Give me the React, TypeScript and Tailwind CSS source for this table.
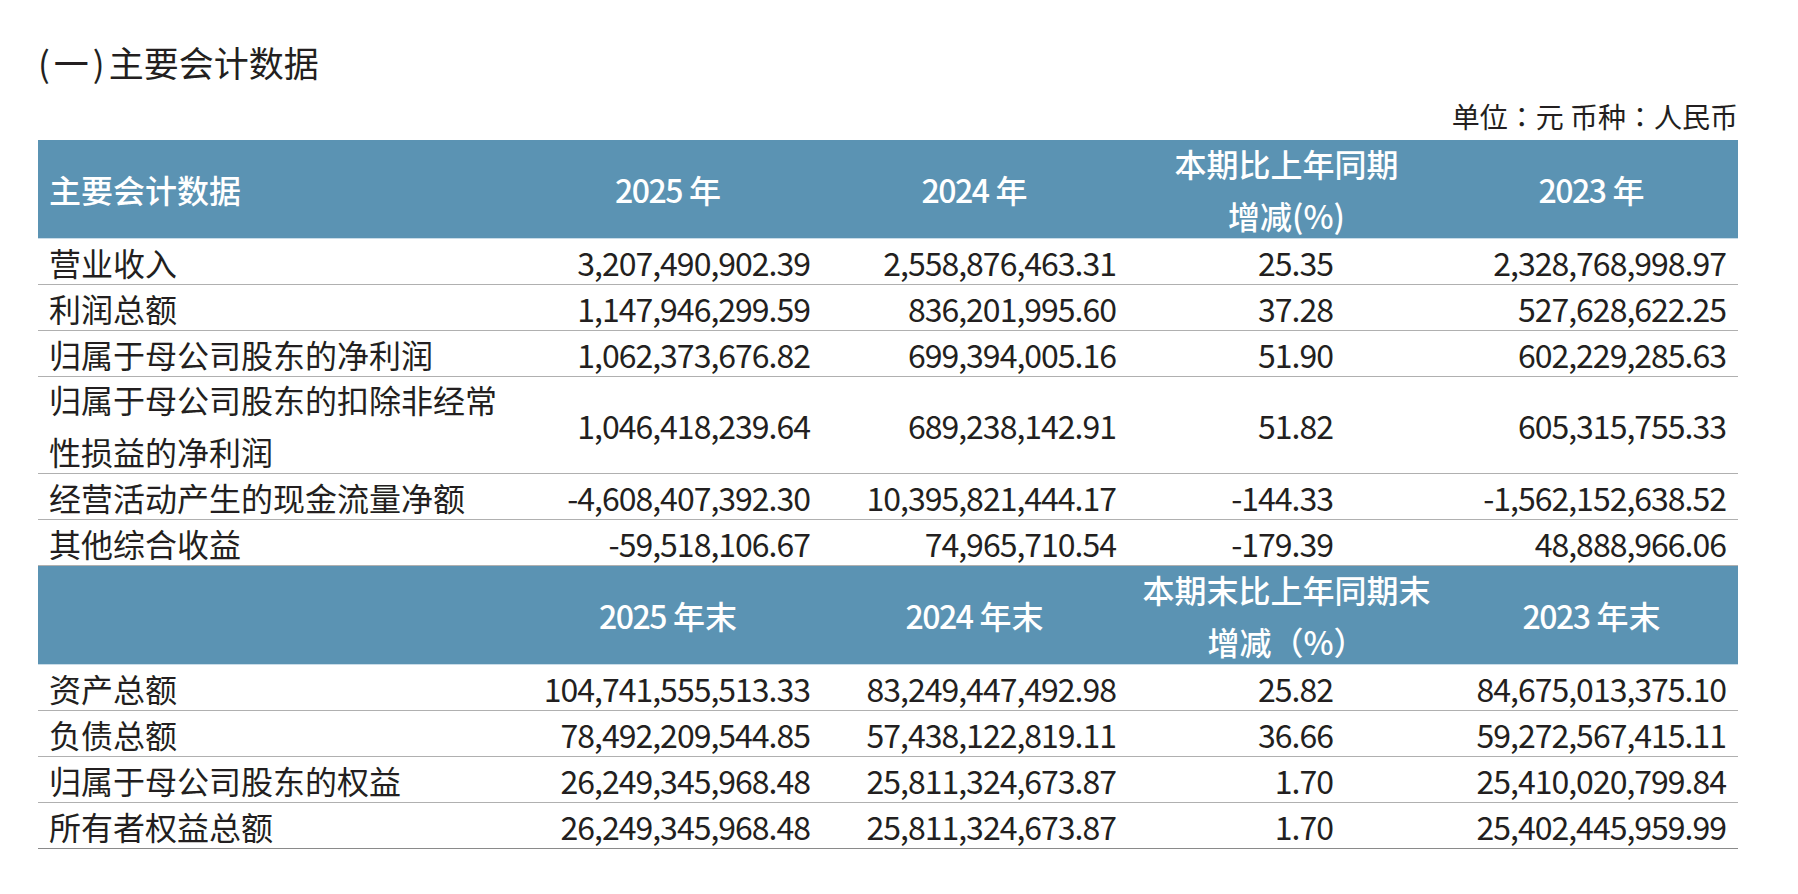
import React from "react";

type Row = [string | string[], string, string, string, string];

const rows1: Row[] = [
  ["营业收入", "3,207,490,902.39", "2,558,876,463.31", "25.35", "2,328,768,998.97"],
  ["利润总额", "1,147,946,299.59", "836,201,995.60", "37.28", "527,628,622.25"],
  ["归属于母公司股东的净利润", "1,062,373,676.82", "699,394,005.16", "51.90", "602,229,285.63"],
  [["归属于母公司股东的扣除非经常", "性损益的净利润"], "1,046,418,239.64", "689,238,142.91", "51.82", "605,315,755.33"],
  ["经营活动产生的现金流量净额", "-4,608,407,392.30", "10,395,821,444.17", "-144.33", "-1,562,152,638.52"],
  ["其他综合收益", "-59,518,106.67", "74,965,710.54", "-179.39", "48,888,966.06"],
];

const rows2: Row[] = [
  ["资产总额", "104,741,555,513.33", "83,249,447,492.98", "25.82", "84,675,013,375.10"],
  ["负债总额", "78,492,209,544.85", "57,438,122,819.11", "36.66", "59,272,567,415.11"],
  ["归属于母公司股东的权益", "26,249,345,968.48", "25,811,324,673.87", "1.70", "25,410,020,799.84"],
  ["所有者权益总额", "26,249,345,968.48", "25,811,324,673.87", "1.70", "25,402,445,959.99"],
];

type HCell = { year?: string; suffix?: string; lines?: string[]; text?: string };

function HeaderRow({ cells }: { cells: HCell[] }) {
  return (
    <>
      {cells.map((c, i) => (
        <div
          key={i}
          className={
            "h-[99px] bg-[#5b93b3] border-b border-[#c9dce8] text-white font-medium text-[32px] leading-[52px] flex items-center " +
            (i === 0 ? "justify-start pl-[11px]" : "justify-center text-center")
          }
        >
          {c.lines ? (
            <div className="flex flex-col items-center">
              {c.lines.map((l, j) => (
                <span key={j} className="whitespace-nowrap">
                  {l}
                </span>
              ))}
            </div>
          ) : c.year ? (
            <span className="whitespace-nowrap">
              <span className="tracking-[-1.5px]">{c.year}</span> {c.suffix}
            </span>
          ) : (
            <span className="whitespace-nowrap">{c.text}</span>
          )}
        </div>
      ))}
    </>
  );
}

function DataRow({ row, last }: { row: Row; last?: boolean }) {
  const tall = Array.isArray(row[0]);
  const h = tall ? "h-[97px]" : "h-[46px]";
  const border = last ? "border-b border-[#8a8a8a]" : "border-b border-[#b0b0b0]";
  const base = `${h} ${border} flex items-center text-[32px] text-[#231f20] whitespace-nowrap`;
  const num = `${base} justify-end tracking-[-1px]`;
  return (
    <>
      <div className={`${base} justify-start pl-[11px] leading-[52px]`}>
        {tall ? (
          <div className="flex flex-col">
            {(row[0] as string[]).map((l, j) => (
              <span key={j}>{l}</span>
            ))}
          </div>
        ) : (
          <span>{row[0] as string}</span>
        )}
      </div>
      <div className={`${num} pr-[11px]`}>{row[1]}</div>
      <div className={`${num} pr-[12px]`}>{row[2]}</div>
      <div className={`${num} pr-[112px]`}>{row[3]}</div>
      <div className={`${num} pr-[12px]`}>{row[4]}</div>
    </>
  );
}

export default function App() {
  return (
    <div className="w-[1798px] h-[894px] bg-white font-['Noto_Sans_CJK_SC',sans-serif] text-[#231f20] overflow-hidden">
      <div className="pl-[38px] w-[1738px]">
        <div className="pt-[45px] text-[35px] leading-[34px] text-[#231f20] whitespace-nowrap">
          <span className="tracking-[4px]">(一)</span>
          <span>主要会计数据</span>
        </div>
        <div className="mt-[23px] text-right text-[28px] leading-[28px] font-['Noto_Sans_CJK_JP','Noto_Sans_CJK_SC',sans-serif]">
          单位：元 币种：人民币
        </div>
        <div className="mt-[10px] grid grid-cols-[477px_306px_307px_317px_293px]">
          <HeaderRow
            cells={[
              { text: "主要会计数据" },
              { year: "2025", suffix: "年" },
              { year: "2024", suffix: "年" },
              { lines: ["本期比上年同期", "增减(%)"] },
              { year: "2023", suffix: "年" },
            ]}
          />
          {rows1.map((r, i) => (
            <DataRow key={i} row={r} />
          ))}
          <HeaderRow
            cells={[
              { text: "" },
              { year: "2025", suffix: "年末" },
              { year: "2024", suffix: "年末" },
              { lines: ["本期末比上年同期末", "增减（%）"] },
              { year: "2023", suffix: "年末" },
            ]}
          />
          {rows2.map((r, i) => (
            <DataRow key={i} row={r} last={i === rows2.length - 1} />
          ))}
        </div>
      </div>
    </div>
  );
}
